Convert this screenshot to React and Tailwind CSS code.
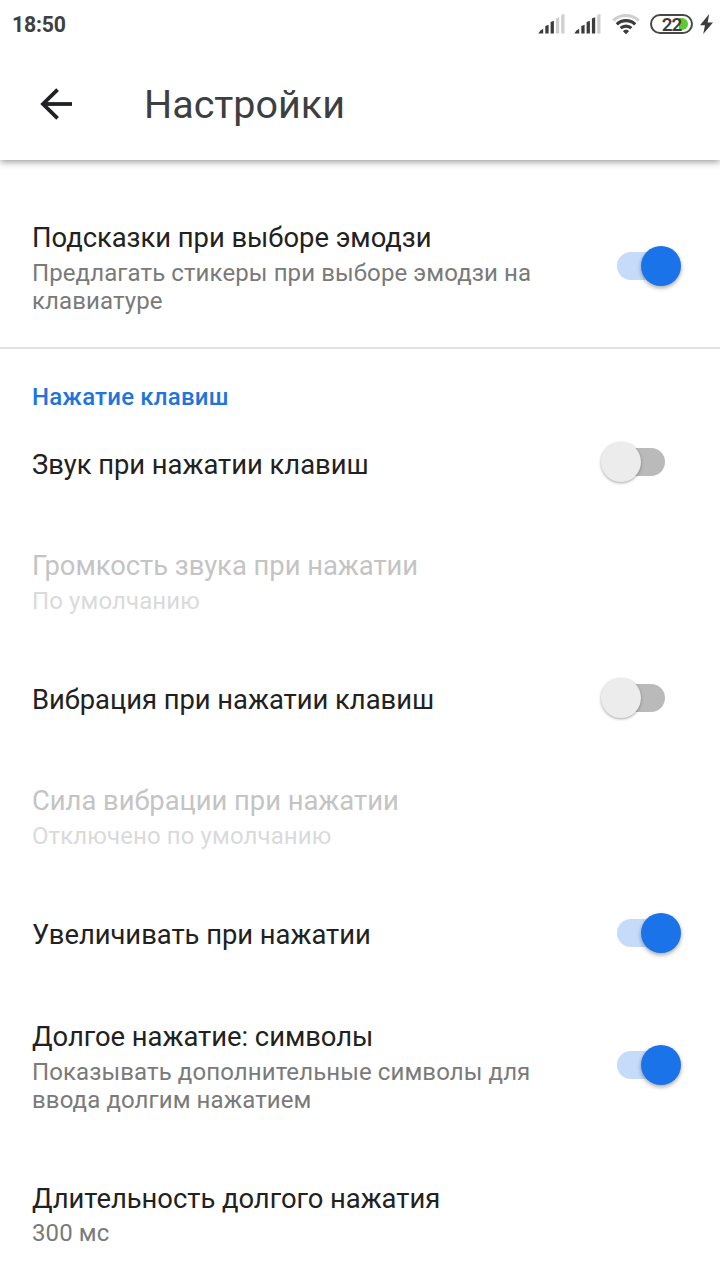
import clsx from 'clsx';

const emojiSettings = [
  {
    title: 'Подсказки при выборе эмодзи',
    summary: 'Предлагать стикеры при выборе эмодзи на клавиатуре',
    checked: true,
  },
];

const keyPressSettings = [
  { title: 'Звук при нажатии клавиш', checked: false },
  { title: 'Громкость звука при нажатии', summary: 'По умолчанию', disabled: true },
  { title: 'Вибрация при нажатии клавиш', checked: false },
  { title: 'Сила вибрации при нажатии', summary: 'Отключено по умолчанию', disabled: true },
  { title: 'Увеличивать при нажатии', checked: true },
  {
    title: 'Долгое нажатие: символы',
    summary: 'Показывать дополнительные символы для ввода долгим нажатием',
    checked: true,
  },
  { title: 'Длительность долгого нажатия', summary: '300 мс' },
];

function SignalIcon({ level }) {
  // Bars get taller left to right, the ones above the level are grey
  const bars = [4, 8, 12, 15.5, 19];
  return (
    <svg width="28" height="20" viewBox="0 0 28 20">
      {bars.map((h, i) => (
        <path
          key={h}
          d={
            i === 0
              ? 'M0.3 19.5 L2.5 16.6 L5.2 14.8 V19.5 Z'
              : `M${2 + i * 5.3} 19.5 V${20 - h} L${5.3 + i * 5.3} ${18.8 - h} V19.5 Z`
          }
          fill={i < level ? '#3c3c3c' : '#cfcfcf'}
        />
      ))}
    </svg>
  );
}

function WifiIcon() {
  return (
    <svg width="28" height="22" viewBox="0 0 28 22" fill="none" strokeWidth="3.1">
      <path d="M1.3 7.6 C8.3 0.8 19.7 0.8 26.7 7.6" stroke="#cfcfcf" />
      <path d="M4.8 11.4 C10 6.4 18 6.4 23.2 11.4" stroke="#3c3c3c" />
      <path d="M8.6 15.2 C11.6 12.4 16.4 12.4 19.4 15.2" stroke="#3c3c3c" />
      <path d="M14 21.2 L11 18.2 C12.6 16.4 15.4 16.4 17 18.2 Z" fill="#3c3c3c" />
    </svg>
  );
}

function Battery({ percent }) {
  return (
    <div className="relative flex h-[20px] w-[43px] items-center justify-center rounded-full border-2 border-[#484848]">
      <span className="absolute top-[2px] right-[3px] h-[12px] w-[9px] rounded-r-full bg-[#5ccb2c]" />
      <span className="relative text-[19px] leading-none font-semibold tracking-[-1px] text-[#3c3c3c]">
        {percent}
      </span>
    </div>
  );
}

function StatusBar() {
  return (
    <div className="flex h-12 items-center justify-between pr-[7px] pl-[12px]">
      <span className="pt-[1px] text-[21.2px] leading-[24px] font-bold tracking-[-0.2px] text-[#404040]">18:50</span>
      <div className="flex items-center">
        <SignalIcon level={3} />
        <div className="w-[8px]" />
        <SignalIcon level={4} />
        <div className="w-[10px]" />
        <WifiIcon />
        <div className="w-[10px]" />
        <Battery percent={22} />
        <svg className="ml-[7px]" width="13" height="20" viewBox="0 0 13 20">
          <path d="M9.2 0 L0 11.2 H5 L3.2 20 L13 8.4 H7.6 Z" fill="#3c3c3c" />
        </svg>
      </div>
    </div>
  );
}

function Header() {
  return (
    <header className="relative z-10 h-40 shrink-0 bg-white shadow-[0_2px_7px_rgba(0,0,0,0.4)]">
      <StatusBar />
      <div className="flex h-28 items-center">
        <button className="ml-10 w-[104px]">
          <svg width="32" height="32" viewBox="0 0 32 32" fill="none" stroke="#202124" strokeWidth="3.8">
            <path d="M32 16 H3" />
            <path d="M17.6 1.6 L3 16 L17.6 30.4" />
          </svg>
        </button>
        <h1 className="pt-[1px] text-[39.5px] leading-[48px] text-[#3c4043]">Настройки</h1>
      </div>
    </header>
  );
}

function Switch({ checked }) {
  return (
    <div className="relative -top-[2px] mr-[39px] flex h-10 w-20 shrink-0 items-center">
      <div className={clsx('ml-4 h-7 w-12 rounded-full', checked ? 'bg-[#c6dbf9]' : 'bg-[#bababa]')} />
      <div
        className={clsx(
          'absolute top-0 h-10 w-10 rounded-full',
          checked
            ? 'right-0 bg-[#1a73e8] shadow-[0_2px_4px_rgba(0,0,0,0.35)]'
            : 'left-[0.4px] bg-[#ececec] shadow-[0_1px_3px_rgba(0,0,0,0.35)]'
        )}
      />
    </div>
  );
}

function SettingRow({ title, summary, checked, disabled }) {
  return (
    <div className="flex items-center">
      <div className={clsx('min-w-0 flex-1 pt-8 pl-8', summary ? 'pb-[34.2px]' : 'pb-[31.5px]')}>
        <div
          className={clsx(
            'text-[27.4px] leading-[38px] tracking-[-0.03px] whitespace-nowrap',
            disabled ? 'text-[#c4c4c4]' : 'text-[#212121]'
          )}
        >
          {title}
        </div>
        {summary && (
          <div
            className={clsx(
              'mt-[1.7px] max-w-[520px] text-[24px] leading-[28px] tracking-[0.1px]',
              disabled ? 'text-[#dadada]' : 'text-[#7a7a7a]'
            )}
          >
            {summary}
          </div>
        )}
      </div>
      {checked !== undefined && <Switch checked={checked} />}
    </div>
  );
}

export default function App() {
  return (
    <div className="flex h-[1280px] w-[720px] flex-col overflow-hidden bg-white font-['Roboto',sans-serif]">
      <Header />

      <main className="flex-1 overflow-hidden pt-[27px]">
        {emojiSettings.map((item) => (
          <SettingRow key={item.title} {...item} />
        ))}

        {/* Key press section */}
        <section className="-mt-[2px] border-t-2 border-[#e0e0e0]">
          <h2 className="px-8 pt-8 pb-[0.7px] text-[24px] leading-[32px] font-medium tracking-[0.2px] text-[#1f74de]">
            Нажатие клавиш
          </h2>
          {keyPressSettings.map((item) => (
            <SettingRow key={item.title} {...item} />
          ))}
        </section>
      </main>
    </div>
  );
}
